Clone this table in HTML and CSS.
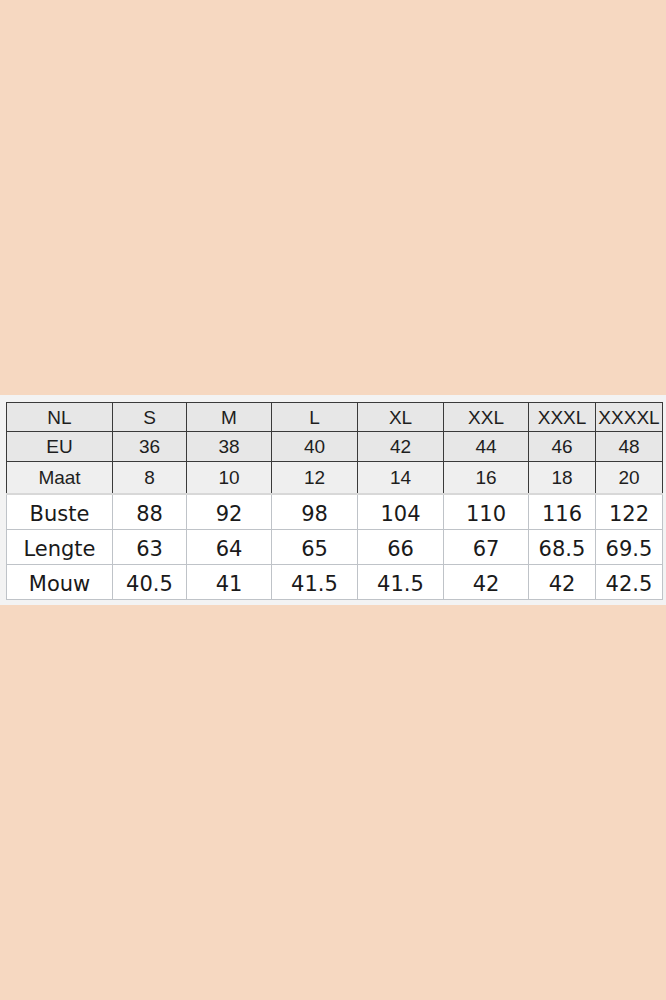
FILE: index.html
```html
<!DOCTYPE html>
<html>
<head>
<meta charset="utf-8">
<link rel="stylesheet" href="styles.css">
</head>
<body>
<div class="band">
  <table class="sizes">
    <colgroup>
      <col class="c0"><col class="c1"><col class="c2"><col class="c3"><col class="c4"><col class="c5"><col class="c6"><col class="c7">
    </colgroup>
    <tbody>
      <tr class="hd r1"><td>NL</td><td>S</td><td>M</td><td>L</td><td>XL</td><td>XXL</td><td>XXXL</td><td>XXXXL</td></tr>
      <tr class="hd r2"><td>EU</td><td>36</td><td>38</td><td>40</td><td>42</td><td>44</td><td>46</td><td>48</td></tr>
      <tr class="hd r3"><td>Maat</td><td>8</td><td>10</td><td>12</td><td>14</td><td>16</td><td>18</td><td>20</td></tr>
      <tr class="bd"><td>Buste</td><td>88</td><td>92</td><td>98</td><td>104</td><td>110</td><td>116</td><td>122</td></tr>
      <tr class="bd"><td>Lengte</td><td>63</td><td>64</td><td>65</td><td>66</td><td>67</td><td>68.5</td><td>69.5</td></tr>
      <tr class="bd"><td>Mouw</td><td>40.5</td><td>41</td><td>41.5</td><td>41.5</td><td>42</td><td>42</td><td>42.5</td></tr>
    </tbody>
  </table>
</div>
</body>
</html>
```

FILE: styles.css
```css
html, body {
  margin: 0;
  padding: 0;
  background: #f6d8c1;
  height: 1000px;
}
.band {
  margin-top: 395px;
  height: 210px;
  background: #f3f3f3;
  padding: 7px 0 0 6px;
  box-sizing: border-box;
  overflow: hidden;
}
.sizes {
  border-collapse: collapse;
  table-layout: fixed;
  width: 657px;
}
.c0 { width: 106px; }
.c1 { width: 74px; }
.c2 { width: 85px; }
.c3 { width: 86px; }
.c4 { width: 86px; }
.c5 { width: 85px; }
.c6 { width: 67px; }
.c7 { width: 67px; }
.sizes td {
  padding: 0;
  text-align: center;
  vertical-align: middle;
  white-space: nowrap;
}
.hd td {
  font-family: "Liberation Sans", Arial, sans-serif;
  font-size: 19px;
  color: #1e1e1e;
  border: 1px solid #3a3a3a;
  background: #e7e7e7;
  padding-top: 1px;
}
.r1 td { height: 27px; }
.r2 td { height: 28px; }
.r3 td { height: 30px; background: #efefef; }
.bd td {
  font-family: "DejaVu Sans", sans-serif;
  font-size: 21px;
  color: #1a1a1a;
  background: #fff;
  border: 1px solid #bfc3c8;
  height: 31px;
  padding-top: 3px;
}
.r3 + .bd td { border-top: 2px solid #d8d8d8; }
```
